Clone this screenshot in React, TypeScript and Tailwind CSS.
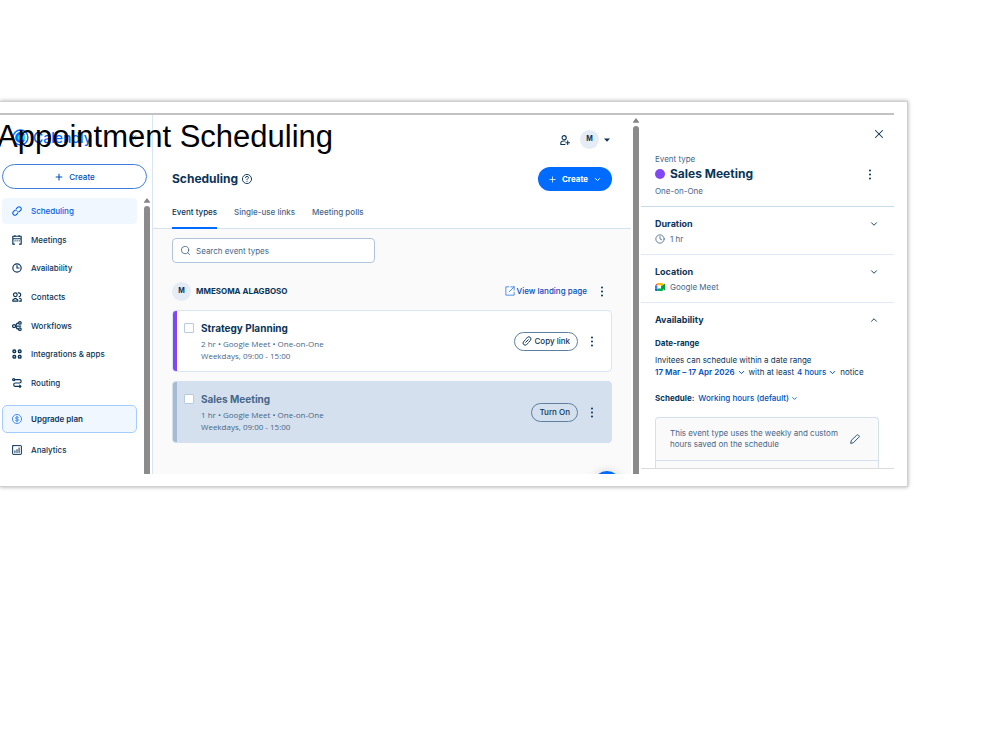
import type { ReactNode } from "react";
import { ChevronDown, ChevronUp, ChevronsLeft, Clock, Plus, Search, X } from "lucide-react";

type IconProps = { children: ReactNode; className?: string; width?: number };

function Icon({ children, className = "size-[10px]", width = 2 }: IconProps) {
  return (
    <svg
      viewBox="0 0 24 24"
      fill="none"
      stroke="currentColor"
      strokeWidth={width}
      strokeLinecap="round"
      strokeLinejoin="round"
      className={`shrink-0 ${className}`}
      aria-hidden="true"
    >
      {children}
    </svg>
  );
}

function Dots() {
  return (
    <svg viewBox="0 0 4 12" className="h-[11px] w-[4px]" fill="#0b3558" aria-hidden="true">
      <circle cx="2" cy="1.6" r="1.1" />
      <circle cx="2" cy="6" r="1.1" />
      <circle cx="2" cy="10.4" r="1.1" />
    </svg>
  );
}

const navItems: { label: string; icon: ReactNode }[] = [
  {
    label: "Scheduling",
    icon: (
      <Icon width={2.6}>
        <path d="M10.500 6.500 13.500 3.500a4.900 4.900 0 0 1 7 7l-3 3q-2 1.500-4 .5" />
        <path d="M13.500 17.500 10.500 20.500a4.900 4.900 0 0 1-7-7l3-3q2-1.500 4-.5" />
      </Icon>
    ),
  },
  {
    label: "Meetings",
    icon: (
      <Icon width={2.8}>
        <path d="M2 22V3h20v19h-4M2 22h4M2 9h20" />
        <path d="M7 1v2M17 1v2M7 14h.5M12 14h.5M17 14h.5" />
      </Icon>
    ),
  },
  {
    label: "Availability",
    icon: (
      <Icon width={2.8}>
        <circle cx="12" cy="12" r="10" />
        <path d="M12 6v6h5" />
      </Icon>
    ),
  },
  {
    label: "Contacts",
    icon: (
      <Icon width={2.800}>
        <circle cx="8" cy="6.500" r="4.500" />
        <path d="M2 22v-3l4-3h4l4 3v3zM15 2h2q4 .5 4 4.500t-4 4.500M18 15q4 0 4 3v4h-4" />
      </Icon>
    ),
  },
  {
    label: "Workflows",
    icon: (
      <Icon width={3}>
        <circle cx="5" cy="12" r="3.600" />
        <circle cx="19" cy="4.500" r="3" />
        <circle cx="19" cy="19.500" r="3" />
        <path d="M9 12h12M15.500 4.500Q11 5 10 9M15.500 19.500Q11 19 10 15" />
      </Icon>
    ),
  },
  {
    label: "Integrations & apps",
    icon: (
      <Icon width={3.4}>
        <rect x="2.500" y="2.500" width="6" height="6" rx="2" />
        <rect x="15.500" y="2.500" width="6" height="6" rx="2" />
        <rect x="2.500" y="15.500" width="6" height="6" rx="2" />
        <rect x="15.500" y="15.500" width="6" height="6" rx="2" />
      </Icon>
    ),
  },
  {
    label: "Routing",
    icon: (
      <Icon width={2.8}>
        <circle cx="4" cy="4" r="2.500" />
        <path d="M7 4h11a4 4 0 0 1 0 8H8a4 4 0 0 0 0 8h13M18.500 17l3 3-3 3" />
      </Icon>
    ),
  },
];

function ScrollBar() {
  return (
    <div className="flex w-[6px] shrink-0 flex-col gap-[3px]" aria-hidden="true">
      <svg viewBox="0 0 6 5" className="h-[5px] w-[6px] shrink-0" fill="#858585">
        <path d="M3 0 6.500 4.800H-.5z" />
      </svg>
      <div className="flex-1 rounded-t-[3px] bg-[#8b8b8b]" />
    </div>
  );
}

function Sidebar() {
  return (
    <aside className="flex w-[153px] shrink-0 flex-col border-r border-[#d9e5f3] pl-[2px]">
      <div className="flex h-[49px] items-center gap-[4px] pb-[5px] pl-[10px] pr-[14px] text-[#006bff]">
        <svg viewBox="0 0 24 24" className="size-[17px] shrink-0" fill="none" aria-hidden="true">
          <circle cx="12" cy="12" r="10.500" stroke="#006bff" strokeWidth="2" />
          <circle cx="13" cy="12" r="6" fill="#0ae8f0" />
          <path d="M17 8.500A6 6 0 1 0 17 15.500" stroke="#006bff" strokeWidth="3.400" />
        </svg>
        <span className="flex-1 text-[14px] font-medium">Calendly</span>
        <button type="button" aria-label="Collapse menu">
          <ChevronsLeft className="size-[9px] text-[#0b3558]" />
        </button>
      </div>
      <button
        type="button"
        className="mr-[5px] flex h-[25px] shrink-0 items-center justify-center gap-[5px] rounded-full border border-[#3f7fdc] text-[8px] font-medium text-[#004eba]"
      >
        <Plus className="size-[10px]" strokeWidth={2.6} />
        Create
      </button>
      <div className="mt-[9px] flex min-h-0 flex-1 justify-between pr-[2px]">
        <nav className="flex w-[135px] flex-col">
          <ul className="flex h-[198px] flex-col justify-between">
            {navItems.map((item, i) => (
              <li key={item.label}>
                <a
                  href="#"
                  aria-current={i === 0 ? "page" : undefined}
                  className={`flex h-[26px] items-center gap-[9px] rounded-[4px] pl-[10px] text-[8px] font-medium ${
                    i === 0 ? "bg-[#f0f7ff] text-[#0060e6]" : "text-[#0b3558]"
                  }`}
                >
                  {item.icon}
                  {item.label}
                </a>
              </li>
            ))}
          </ul>
          <a
            href="#"
            className="mt-[9px] flex h-[28px] items-center gap-[9px] rounded-[5px] border border-[#a5ccff] bg-[#f0f7ff] pl-[9px] text-[8px] font-semibold text-[#0b3558]"
          >
            <Icon className="size-[10px] text-[#2f80f5]">
              <circle cx="12" cy="12" r="11" />
              <path d="M15.500 8.500Q14 7 12 7 8.500 7 8.500 9.500T12 12t3.500 2.500T12 17q-2 0-3.500-1.500M12 5v14" />
            </Icon>
            Upgrade plan
          </a>
          <a
            href="#"
            className="mt-[4px] flex h-[26px] items-center gap-[9px] pl-[10px] text-[8px] font-medium text-[#0b3558]"
          >
            <Icon width={2.4}>
              <rect x="1.500" y="1.500" width="21" height="21" rx="1" />
              <path d="M7 18v-4M12 18v-7M17 18V7" />
            </Icon>
            Analytics
          </a>
        </nav>
        <ScrollBar />
      </div>
    </aside>
  );
}

type EventCardProps = { title: string; details: string; off?: boolean; action: ReactNode };

function EventCard({ title, details, off = false, action }: EventCardProps) {
  const id = title.toLowerCase().replace(" ", "-");
  return (
    <article
      className={`flex h-[62px] overflow-hidden rounded-[4px] border ${
        off ? "border-[#d4e0ed] bg-[#d4e0ed]" : "border-[#d9e5f3] bg-white"
      }`}
    >
      <div className={`-my-px -ml-px w-[5px] shrink-0 ${off ? "bg-[#a6bbd1]" : "bg-[#8247f5]"}`} />
      <input
        id={id}
        type="checkbox"
        className="ml-[7px] mt-[12px] size-[10px] shrink-0 appearance-none rounded-[1px] border border-[#b9cbe2] bg-white"
      />
      <div className="ml-[7px] min-w-0 flex-1 pt-[10px] text-[#476788]">
        <label
          htmlFor={id}
          className={`mb-[3px] block text-[10px] leading-[14px] font-bold ${off ? "text-[#476788]" : "text-[#0b3558]"}`}
        >
          {title}
        </label>
        <div className="font-['Open_Sans','Liberation_Sans',sans-serif] text-[8px] leading-[12px]">
          <p>{details}</p>
          <p>Weekdays, 09:00 - 15:00</p>
        </div>
      </div>
      <div className="flex items-center gap-[12px] pr-[17px]">
        {action}
        <button type="button" aria-label={`More options for ${title}`}>
          <Dots />
        </button>
      </div>
    </article>
  );
}

const pill =
  "flex h-[19px] items-center gap-[2px] rounded-full border border-[#5f7f9f] px-[7px] text-[8px] font-medium text-[#0b3558]";

function MainColumn() {
  return (
    <main className="relative flex min-w-0 flex-1 flex-col overflow-hidden bg-[#fafafa]">
      <header className="flex h-[114px] shrink-0 flex-col border-b border-[#d4e2f2] bg-white pl-[19px] pr-[19px]">
        <div className="mt-[15px] flex h-[19px] items-center justify-end">
          <button type="button" aria-label="Invite user" className="mr-[10px] text-[#0b3558]">
            <Icon width={2.6}>
              <circle cx="10" cy="6.500" r="5" />
              <path d="M12 14.500H8q-6 0-6 5V23h10M18.500 14v9M14 18.500h9" />
            </Icon>
          </button>
          <button type="button" aria-label="Account" className="flex items-center gap-[5px]">
            <span className="flex size-[19px] items-center justify-center rounded-full bg-[#e5ecf6] text-[7px] font-bold text-[#0b3558]">
              M
            </span>
            <svg viewBox="0 0 6 4" className="mr-[2px] h-[4px] w-[6px]" fill="#0b3558" aria-hidden="true">
              <path d="M0 .5h6L3 3.700z" />
            </svg>
          </button>
        </div>
        <div className="mt-[18px] flex h-[24px] items-center justify-between">
          <h2 className="flex items-center gap-[4px] text-[12px] font-bold text-[#0b3558]">
            Scheduling
            <Icon width={2.2}>
              <circle cx="12" cy="12" r="11" />
              <path d="M8.500 9q0-3.500 3.500-3.500T15.500 9q0 1.500-2 2.500T12 14M12 18v.2" />
            </Icon>
          </h2>
          <button
            type="button"
            className="flex h-[24px] items-center gap-[5px] rounded-full bg-[#006bff] px-[10px] text-[8px] font-bold text-white"
          >
            <Plus className="size-[9px]" />
            Create
            <ChevronDown className="size-[9px]" strokeWidth={2.6} />
          </button>
        </div>
        <div className="flex flex-1 gap-[17px] text-[8px] font-medium" role="tablist">
          <button type="button" role="tab" aria-selected="true" className="-mb-px border-b-2 border-[#006bff] pt-[6px] text-[#0b3558]">
            Event types
          </button>
          <button type="button" role="tab" aria-selected="false" className="pt-[4px] text-[#476788]">
            Single-use links
          </button>
          <button type="button" role="tab" aria-selected="false" className="pt-[4px] text-[#476788]">
            Meeting polls
          </button>
        </div>
      </header>
      <div className="flex flex-col pl-[19px] pr-[19px] pt-[9px]">
        <label className="flex h-[25px] w-[203px] items-center gap-[5px] rounded-[4px] border border-[#b0c4de] bg-white pl-[7px] text-[#476788]">
          <Search className="size-[11px]" strokeWidth={1.800} />
          <input
            type="search"
            aria-label="Search event types"
            placeholder="Search event types"
            className="min-w-0 flex-1 text-[8px] outline-none placeholder:text-[#476788]"
          />
        </label>
        <div className="mt-[18px] flex h-[20px] items-center gap-[5px] pr-[8px] text-[#0b3558]">
          <span className="flex size-[19px] items-center justify-center rounded-full bg-[#e5ecf6] text-[7px] font-bold">M</span>
          <h3 className="flex-1 text-[8px] font-bold">MMESOMA ALAGBOSO</h3>
          <a href="#" className="mr-[8px] flex items-center gap-[2px] text-[8px] font-medium text-[#004eba]">
            <Icon className="size-[10px] text-[#2f80e5]">
              <path d="M9 2H2v20h20v-7M14 2h8v8M22 2 10 14" />
            </Icon>
            View landing page
          </a>
          <button type="button" aria-label="More options">
            <Dots />
          </button>
        </div>
        <div className="mt-[9px] flex flex-col gap-[9px]">
          <EventCard
            title="Strategy Planning"
            details="2 hr • Google Meet • One-on-One"
            action={
              <button type="button" className={pill}>
                <Icon width={2.4}>
                  <path d="M9 15 15 9M9.500 6.500 13 3.500a4.500 4.500 0 0 1 7 7l-4 4.500M14.500 17.500 11 20.500a4.500 4.500 0 0 1-7-7L8 9" />
                </Icon>
                Copy link
              </button>
            }
          />
          <EventCard
            title="Sales Meeting"
            details="1 hr • Google Meet • One-on-One"
            off
            action={
              <button type="button" className={pill}>
                Turn On
              </button>
            }
          />
        </div>
      </div>
      <button
        type="button"
        aria-label="Help"
        className="absolute -bottom-[25px] right-[10px] size-[28px] rounded-full bg-[#006bff] shadow-[0_0_10px_rgba(0,0,0,0.15)]"
      />
    </main>
  );
}

function SummaryRow({ title, children }: { title: string; children: ReactNode }) {
  return (
    <section className="flex h-[48px] shrink-0 flex-col border-b border-[#e0eaf6] pl-[14px] pr-[15px] pt-[10px]">
      <div className="flex h-[14px] items-center justify-between text-[#0b3558]">
        <h3 className="text-[9px] font-bold">{title}</h3>
        <button type="button" aria-label={`Expand ${title}`}>
          <ChevronDown className="size-[10px]" strokeWidth={2.200} />
        </button>
      </div>
      <p className="mt-px flex h-[13px] items-center gap-[5px] text-[8px] text-[#476788]">{children}</p>
    </section>
  );
}

function DetailsPanel() {
  return (
    <aside className="mb-[5px] flex w-[253px] shrink-0 flex-col overflow-hidden border-b border-[#dcdcdc] text-[#0b3558]">
      <div className="flex h-[37px] shrink-0 items-center justify-end pr-[8px]">
        <button type="button" aria-label="Close">
          <X className="size-[14px]" strokeWidth={1.800} />
        </button>
      </div>
      <section className="h-[55px] shrink-0 border-b border-[#c9dbee] pl-[14px] pr-[22px]">
        <p className="text-[8px] leading-[14px] text-[#476788]">Event type</p>
        <div className="flex h-[16px] items-center gap-[5px]">
          <span className="size-[10px] rounded-full bg-[#8247f5]" />
          <h2 className="flex-1 text-[12px] font-bold">Sales Meeting</h2>
          <button type="button" aria-label="Event options">
            <Dots />
          </button>
        </div>
        <p className="pt-[2px] text-[8px] leading-[14px] text-[#476788]">One-on-One</p>
      </section>
      <SummaryRow title="Duration">
        <Clock className="size-[10px]" />
        1 hr
      </SummaryRow>
      <SummaryRow title="Location">
        <svg viewBox="0 0 20 16" className="h-[8px] w-[10px]" aria-hidden="true">
          <path d="M0 5 5 0v5z" fill="#ea4335" />
          <path d="M0 5h5v6H0z" fill="#2684fc" />
          <path d="M0 11h5v5H2q-2 0-2-2z" fill="#0066da" />
          <path d="M5 0h9q2 0 2 2v5l-4-2H5z" fill="#ffba00" />
          <path d="M5 5h7v6H5z" fill="#ffffff" />
          <path d="M5 11h7V5l4 3v6q0 2-2 2H5z" fill="#00ac47" />
          <path d="m12 8 6-6q2-1 2 0v12q0 1-2 0z" fill="#00a040" />
        </svg>
        Google Meet
      </SummaryRow>
      <section className="flex shrink-0 flex-col pl-[14px] pr-[15px] pt-[10px] text-[8px]">
        <div className="flex h-[14px] items-center justify-between">
          <h3 className="text-[9px] font-bold">Availability</h3>
          <button type="button" aria-label="Collapse Availability">
            <ChevronUp className="size-[10px]" strokeWidth={2.200} />
          </button>
        </div>
        <h4 className="mt-[10px] text-[8px] leading-[12px] font-bold">Date-range</h4>
        <p className="mt-[5px] leading-[12px]">Invitees can schedule within a date range</p>
        <p className="flex h-[12px] items-center gap-[3px] whitespace-nowrap">
          <button type="button" className="flex items-center gap-[2px] font-semibold text-[#004eba]">
            17 Mar – 17 Apr 2026 <ChevronDown className="size-[9px]" strokeWidth={2.600} />
          </button>
          with at least
          <button type="button" className="flex items-center gap-[2px] font-medium text-[#004eba]">
            4 hours <ChevronDown className="size-[9px]" strokeWidth={2.600} />
          </button>
          notice
        </p>
        <p className="mt-[14px] flex h-[12px] items-center gap-[4px] font-bold">
          Schedule:
          <button type="button" className="flex items-center gap-[2px] font-medium text-[#004eba]">
            Working hours (default) <ChevronDown className="size-[7px]" strokeWidth={2.800} />
          </button>
        </p>
        <div className="mt-[13px] rounded-t-[4px] border border-b-0 border-[#d4e0ed] bg-[#fafafa] text-[#476788]">
          <div className="flex h-[43px] items-center justify-between border-b border-[#d4e0ed] pl-[14px] pr-[18px]">
            <p className="w-[170px] leading-[11px]">This event type uses the weekly and custom hours saved on the schedule</p>
            <button type="button" aria-label="Edit schedule" className="text-[#0b3558]">
              <Icon>
                <path d="M16.500 2.500a2.500 2.500 0 0 1 3.500 0l1.500 1.500a2.500 2.500 0 0 1 0 3.500L8 21l-6.500 1.500L3 16z" />
              </Icon>
            </button>
          </div>
          <div className="h-[20px]" />
        </div>
      </section>
    </aside>
  );
}

export default function App() {
  return (
    <div className="overflow-hidden bg-white pt-[101px] pb-[20px] pr-[92px] font-['Inter','Liberation_Sans',sans-serif]">
      <div className="relative border-y border-r border-[#d0d0d0] bg-white pb-[12px] pr-[13px] pt-[11px] shadow-[0_0_4px_rgba(0,0,0,0.35)]">
        <div className="flex h-[361px] border-t-2 border-[#c2c2c2]">
          <Sidebar />
          <MainColumn />
          <div className="ml-[2px] mr-[2px] flex pt-[3px]">
            <ScrollBar />
          </div>
          <DetailsPanel />
        </div>
        <h1 className="absolute -left-[3px] top-[17px] font-['Liberation_Sans',sans-serif] text-[31px] leading-[36px] whitespace-nowrap text-black">
          Appointment Scheduling
        </h1>
      </div>
    </div>
  );
}
